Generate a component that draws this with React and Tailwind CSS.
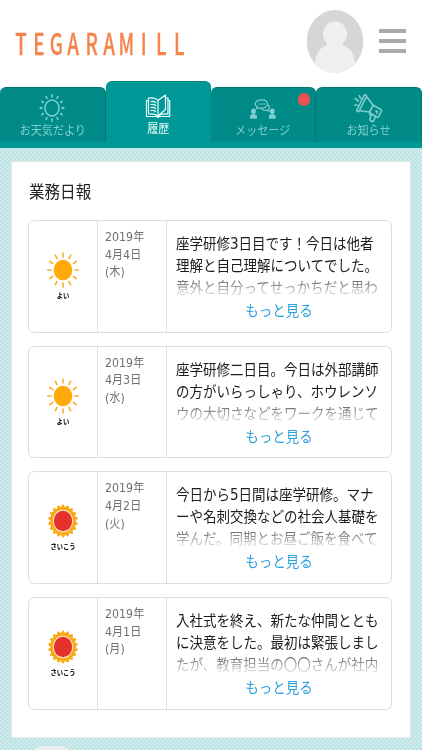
import React from 'react';

const RAYS = [0, 30, 60, 90, 120, 150, 180, 210, 240, 270, 300, 330];
const PETALS = [0, 20, 40, 60, 80, 100, 120, 140, 160, 180, 200, 220, 240, 260, 280, 300, 320, 340];

const reports = [
  {
    id: 4,
    date: ['2019年', '4月4日', '(木)'],
    weather: 'good',
    lines: ['座学研修3日目です！今日は他者', '理解と自己理解についてでした。', '意外と自分ってせっかちだと思わ'],
  },
  {
    id: 3,
    date: ['2019年', '4月3日', '(水)'],
    weather: 'good',
    lines: ['座学研修二日目。今日は外部講師', 'の方がいらっしゃり、ホウレンソ', 'ウの大切さなどをワークを通じて'],
  },
  {
    id: 2,
    date: ['2019年', '4月2日', '(火)'],
    weather: 'best',
    lines: ['今日から5日間は座学研修。マナ', 'ーや名刺交換などの社会人基礎を', '学んだ。同期とお昼ご飯を食べて'],
  },
  {
    id: 1,
    date: ['2019年', '4月1日', '(月)'],
    weather: 'best',
    lines: ['入社式を終え、新たな仲間ととも', 'に決意をした。最初は緊張しまし', 'たが、教育担当の〇〇さんが社内'],
  },
];

const SunOutlineIcon = () => (
  <svg viewBox="0 0 26 28" className="h-[28px] w-[26px]" fill="none" stroke="currentColor" strokeWidth="1.500" strokeLinecap="round">
    <ellipse cx="13" cy="14" rx="7" ry="8" />
    {RAYS.map((deg) => (
      <path key={deg} d="M0 -11.2V-13" strokeWidth="1.800" transform={`translate(13 14) scale(.9 1) rotate(${deg})`} />
    ))}
  </svg>
);

const BookIcon = () => (
  <svg viewBox="0 0 26 25" className="h-[25px] w-[26px]" fill="none" stroke="currentColor" strokeWidth="1.200" strokeLinejoin="round" strokeLinecap="round">
    <path d="M13 22C10.500 20 7.500 19.500 3.500 20V4C7.500 3.500 11 4 13 6.500V22L20.500 15.500V1L13 6.500" />
    <path d="M20.500 4H23V20C19 19.500 15.500 20 13 22" />
    <path d="M3.500 6.500H1.500V22.500H11.500L13 23.500L14.500 22.500H24.700V6.500H23" />
    <path d="M6 7.500C8 7.200 9.500 7.500 10.700 8.500M6 10.500C8 10.200 9.500 10.500 10.700 11.500M6 13.500C8 13.200 9.500 13.500 10.700 14.500M6 16.500C8 16.200 9.500 16.500 10.700 17.500" />
  </svg>
);

const ChatIcon = () => (
  <svg viewBox="0 0 26 20" className="h-[20px] w-[26px]" fill="none" stroke="currentColor" strokeWidth="1.200">
    <path d="M6.500 9.500L7.300 7.800C3.500 5.500 5.500 .8 11.500 .8C15.300 .8 17.500 2.600 17.500 5C17.500 8.500 13.500 9.700 9.500 8.900L6.500 9.500Z" />
    <path d="M17.500 5.500C20 6.500 20 9.300 18.300 10.500L19 12L16.500 11.400C14 11.700 12.300 10.900 11.700 9.500" />
    <path d="M8.500 5H9.700M11 5H12.200M13.500 5H14.700" strokeWidth="1.500" />
    <g fill="currentColor" stroke="none">
      <ellipse cx="3.500" cy="12.300" rx="2.400" ry="2.800" />
      <path d="M2.600 14H4.400V15.300L6.900 16.200V19.700H.1V16.200L2.600 15.300Z" />
      <ellipse cx="22.300" cy="12.300" rx="2.400" ry="2.800" />
      <path d="M21.400 14H23.200V15.300L25.700 16.200V19.700H18.900V16.200L21.400 15.300Z" />
    </g>
  </svg>
);

const MegaphoneIcon = () => (
  <svg viewBox="0 0 29 29" className="h-[29px] w-[29px]" fill="none" stroke="currentColor" strokeWidth="1.600" strokeLinejoin="round" strokeLinecap="round">
    <path d="M10.300 1.300C11 .3 13 1 12.600 2.500L5.200 17C4.500 18.300 2.400 17.500 2.900 16Z" />
    <path d="M12.800 3L19.200 11.300L15.500 18L5.500 16.700" />
    <path d="M19.200 11.300L26.500 15.200C27.500 15.800 27.800 16.500 27.300 17.500L24.800 22.300C24.300 23.200 23.500 23.500 22.500 23L15.500 18.500" />
    <path d="M17.500 20.300L15.800 25.300C15.500 26.300 18.500 28.300 19.300 27.300L21.500 22.800M15.500 20.500L17.500 20.300" />
    <path d="M21.800 16.800L23.500 17.700L22.700 19.300" />
    <path d="M5.200 1.700L6.700 4.600M1.200 4.600L4.300 7M.9 11L3.200 11.300" />
  </svg>
);

const GoodIcon = () => (
  <svg viewBox="0 0 34 36" className="h-[36px] w-[34px]">
    <ellipse cx="17" cy="18" rx="9.300" ry="10.300" fill="#ffa90a" />
    {RAYS.map((deg) => (
      <path key={deg} d="M0 -13.200V-17" stroke="#f9ad2b" strokeWidth="1.700" strokeLinecap="round" transform={`translate(17 18) scale(.9 1) rotate(${deg})`} />
    ))}
  </svg>
);

const BestIcon = () => (
  <svg viewBox="0 0 34 36" className="h-[36px] w-[34px]">
    <g transform="translate(17 18) scale(.9 1)">
      {PETALS.map((deg) => (
        <path key={deg} d="M-2.800 -13L-.6 -16.500H.6L2.800 -13Z" fill="#fba919" transform={`rotate(${deg})`} />
      ))}
      <circle r="14" fill="#fba919" />
      <circle r="11.300" fill="#fdeacb" />
      <circle r="10.200" fill="#e6302b" />
    </g>
  </svg>
);

const tabs = [
  { label: 'お天気だより', Icon: SunOutlineIcon, iconClass: 'h-[35px] pb-[1px]' },
  { label: '履歴', Icon: BookIcon, iconClass: 'h-[39px] pb-[2px]', active: true },
  { label: 'メッセージ', Icon: ChatIcon, iconClass: 'h-[35px] pb-[4px]', badge: true },
  { label: 'お知らせ', Icon: MegaphoneIcon, iconClass: 'h-[35px]' },
];

const Header = () => (
  <header className="flex h-[81px] shrink-0 items-center justify-between pl-[12px] pr-[16px]">
    <h1 className="flex pt-[4px] font-['Noto_Sans_CJK_JP',sans-serif] text-[29.500px] font-medium leading-none text-[#f5844c] [-webkit-text-stroke:.3px_#f5844c]">
      {'TEGARAMILL'.split('').map((letter, i) => (
        <span key={i} className="flex w-[17.600px] justify-center">
          <span className="scale-x-[.64]">{letter}</span>
        </span>
      ))}
    </h1>
    <div className="flex items-center gap-[15px]">
      <svg viewBox="0 0 58 64" className="h-[64px] w-[58px]">
        <clipPath id="avatar">
          <ellipse cx="29" cy="32.500" rx="28.300" ry="31.500" />
        </clipPath>
        <g clipPath="url(#avatar)">
          <rect width="58" height="64" fill="#d6d6d6" />
          <g fill="#efefef">
            <ellipse cx="29" cy="25" rx="12" ry="12.500" />
            <rect x="21" y="32" width="16" height="8" />
            <path d="M9 64V54C9 47 14 36.500 23 36H35C44 36.500 49 47 49 54V64Z" />
          </g>
        </g>
      </svg>
      <button className="flex w-[27px] flex-col gap-[6px]">
        <span className="h-1 bg-[#aaaaaa]" />
        <span className="h-1 bg-[#aaaaaa]" />
        <span className="h-1 bg-[#aaaaaa]" />
      </button>
    </div>
  </header>
);

const TabBar = () => (
  <nav className="flex h-[67px] shrink-0 items-end border-b-[6px] border-[#009896]">
    {tabs.map(({ label, Icon, iconClass, active, badge }) => (
      <div
        key={label}
        className={
          active
            ? 'relative flex h-[61px] flex-1 flex-col items-center rounded-t-md border-t border-[#068583] bg-[#009896] text-[#e8ffff]'
            : 'relative flex h-[55px] flex-1 flex-col items-center rounded-t-md border-r border-t border-[#057573] bg-[#008a88] text-[#7fcfd0]'
        }
      >
        <div className={`flex items-end ${iconClass}`}>
          <Icon />
        </div>
        <span className="scale-x-90 whitespace-nowrap text-[12.300px] leading-[16px]">{label}</span>
        {badge && <span className="absolute right-[5px] top-[5px] h-[13px] w-[12px] rounded-full bg-[#f0524f]" />}
      </div>
    ))}
  </nav>
);

const ReportCard = ({ report }) => (
  <article className="flex h-[112.500px] rounded-md border-[1.500px] border-[#dedede]">
    <div className="flex w-[69px] flex-col items-center border-r border-[#dedede] pt-[31px]">
      {report.weather === 'good' ? <GoodIcon /> : <BestIcon />}
      <span className="mt-[3px] scale-x-90 text-[7px] font-bold leading-[10px] text-black">
        {report.weather === 'good' ? 'よい' : 'さいこう'}
      </span>
    </div>
    <div className="w-[69px] border-r border-[#dedede] pl-[7px] pt-[8px] text-[12.300px] leading-[17.700px] text-[#707070]">
      {report.date.map((part) => (
        <p key={part} className="origin-left scale-x-90 whitespace-nowrap">{part}</p>
      ))}
    </div>
    <div className="min-w-0 flex-1 pt-[12px]">
      <div className="h-[66px] overflow-hidden pl-[9px] text-[15px] leading-[22px] text-[#1c1c1c] [mask-image:linear-gradient(black_62%,rgba(0,0,0,.6)_74%,transparent_100%)]">
        {report.lines.map((line) => (
          <p key={line} className="origin-left scale-x-90 whitespace-nowrap">{line}</p>
        ))}
      </div>
      <a className="mt-[1px] block scale-x-90 text-center text-[15px] leading-[22px] text-[#2aa0dc]">もっと見る</a>
    </div>
  </article>
);

export default function App() {
  return (
    <div className="flex h-[750px] w-[422px] flex-col overflow-hidden bg-white font-['DejaVu_Sans','Noto_Sans_CJK_JP',sans-serif]">
      <Header />
      <TabBar />
      <main className="min-h-0 flex-1 overflow-hidden bg-[#cdebea] bg-[radial-gradient(circle_at_1px_1px,#bfe2e2_.8px,transparent_1px),radial-gradient(circle_at_3px_3px,#bfe2e2_.8px,transparent_1px)] bg-[size:4px_4px] px-[11px] pt-[13px]">
        <section className="h-[577px] border border-[#dcebea] bg-white px-[17px] pt-[20px]">
          <h2 className="origin-left scale-x-90 text-[17.300px] leading-[20px] text-[#222222]">業務日報</h2>
          <div className="-ml-px mr-px mt-[18px] flex flex-col gap-[13.200px]">
            {reports.map((report) => (
              <ReportCard key={report.id} report={report} />
            ))}
          </div>
        </section>
        <div className="ml-[17px] mt-[8px] h-[36px] w-[47px] rounded-2xl bg-[#eeeeee]" />
      </main>
    </div>
  );
}
